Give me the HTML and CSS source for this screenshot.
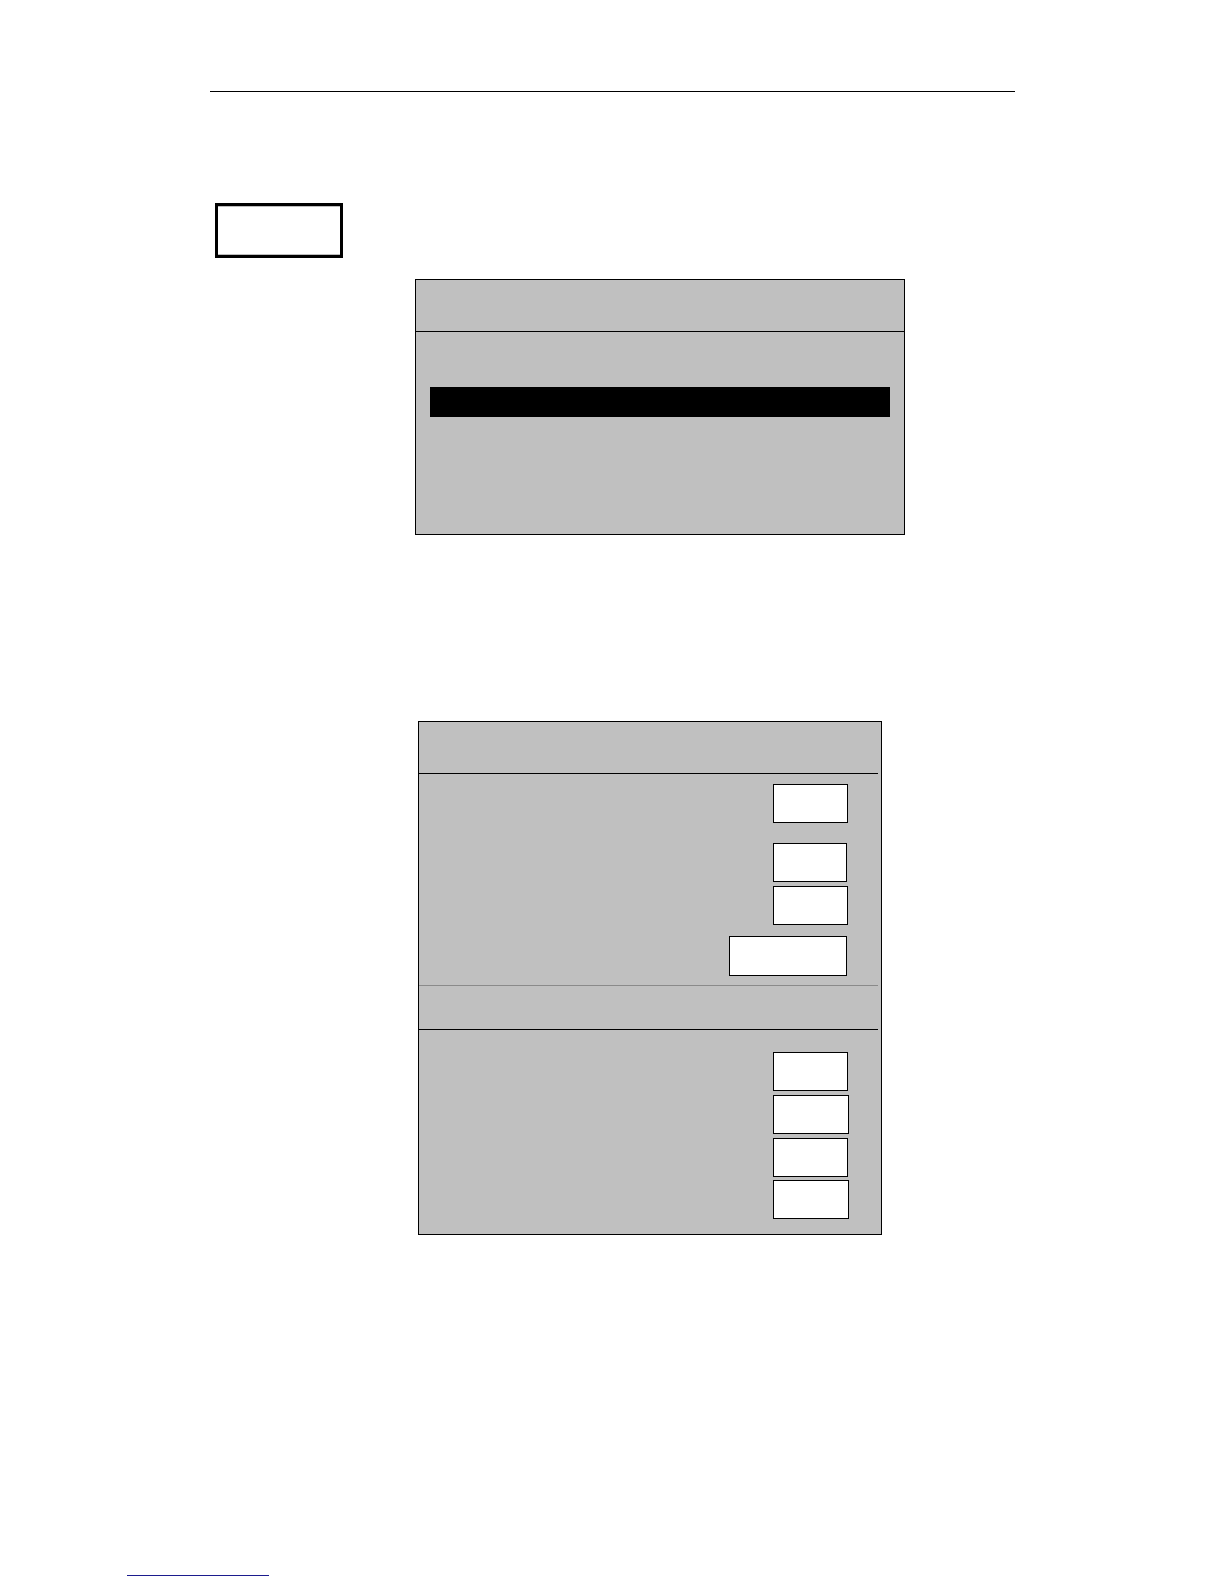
FILE: index.html
```html
<!DOCTYPE html>
<html>
<head>
<meta charset="utf-8">
<link rel="stylesheet" href="styles.css">
</head>
<body>
<div class="page">
  <div class="top-rule"></div>
  <div class="label-box"></div>

  <div class="panel panel-menu">
    <div class="panel-head"></div>
    <div class="panel-body">
      <div class="menu-item selected"></div>
    </div>
  </div>

  <div class="panel panel-form">
    <div class="panel-head form-head"></div>
    <div class="form-section sec-a">
      <div class="field f1"></div>
      <div class="field f2"></div>
      <div class="field f3"></div>
      <div class="field wide f4"></div>
    </div>
    <div class="sub-head"></div>
    <div class="form-section sec-b">
      <div class="field g1"></div>
      <div class="field g2"></div>
      <div class="field g3"></div>
      <div class="field g4"></div>
    </div>
  </div>

  <div class="foot-link"></div>
</div>
</body>
</html>
```

FILE: styles.css
```css
html, body {
  margin: 0;
  padding: 0;
  background: #ffffff;
  font-family: "Liberation Sans", Arial, sans-serif;
}

.page {
  position: relative;
  width: 1224px;
  height: 1584px;
  overflow: hidden;
  display: flow-root;
}

.top-rule {
  margin-top: 91px;
  margin-left: 210px;
  width: 805px;
  height: 1px;
  border-top: 1px solid #000;
}

.label-box {
  margin-top: 110px;
  margin-left: 215px;
  width: 122px;
  height: 49px;
  border: 3px solid #000;
  background: #fff;
  box-shadow: inset 0 1px 0 #bdbdbd, inset 0 -1px 0 #bdbdbd;
}

.panel {
  background: #c0c0c0;
  border: 1px solid #000;
  box-sizing: border-box;
}

.panel-menu {
  margin-top: 21px;
  margin-left: 415px;
  width: 490px;
  height: 256px;
}

.panel-head {
  height: 51px;
  border-bottom: 1px solid #000;
}

.panel-body {
  padding: 55px 14px 0 14px;
}

.menu-item {
  height: 30px;
}

.menu-item.selected {
  background: #000;
}

.panel-form {
  margin-top: 186px;
  margin-left: 418px;
  width: 464px;
  height: 514px;
}

.form-head {
  border-bottom: none;
  height: 52px;
  position: relative;
}

.form-head::after,
.sub-head::after {
  content: "";
  position: absolute;
  left: 0;
  right: 3px;
  bottom: 0;
  height: 1px;
  background: #000;
}

.form-section {
  display: flex;
  flex-direction: column;
  align-items: flex-end;
  padding-right: 33px;
}

.sec-a {
  padding-top: 10px;
  height: 212px;
  box-sizing: border-box;
  border-bottom: 1px solid #8a8a8a;
  margin-right: 3px;
  padding-right: 30px;
}

.sub-head {
  height: 44px;
  position: relative;
}

.sec-b {
  padding-top: 22px;
}

.field {
  width: 73px;
  height: 37px;
  background: #fff;
  border: 1px solid #000;
  flex: none;
}

.field.wide {
  width: 116px;
  height: 38px;
}

.f2 { margin-top: 20px; width: 72px; margin-right: 1px; }
.f3 { margin-top: 4px; }
.f4 { margin-top: 11px; margin-right: 1px; }

.g2 { margin-top: 4px; width: 74px; margin-right: -1px; }
.g3 { margin-top: 4px; }
.g4 { margin-top: 3px; width: 74px; margin-right: -1px; }

.foot-link {
  position: absolute;
  left: 127px;
  top: 1575px;
  width: 142px;
  height: 1px;
  background: #1c1c8e;
}
```
